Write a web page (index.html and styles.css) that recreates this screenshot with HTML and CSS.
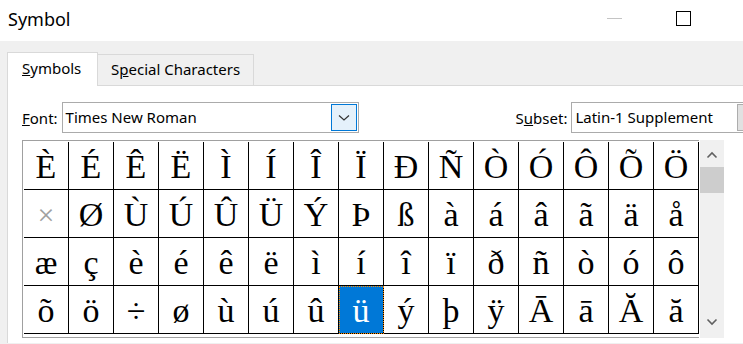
FILE: index.html
```html
<!DOCTYPE html>
<html lang="en">
<head>
  <meta charset="UTF-8" />
  <title>Symbol</title>
  <link rel="stylesheet" href="styles.css">
</head>
<body>
  <div class="titlebar">
    <span class="title">Symbol</span>
    <div class="win-buttons">
      <span class="btn-min"></span>
      <span class="btn-max"></span>
    </div>
  </div>

  <div class="dialog">
    <div class="tabs">
      <div class="tab active"><u>S</u>ymbols</div>
      <div class="tab">S<u>p</u>ecial Characters</div>
    </div>

    <div class="panel">
      <div class="pickers">
        <label class="field-label"><u>F</u>ont:</label>
        <div class="combo font-combo">
          <span class="combo-text">Times New Roman</span>
          <span class="combo-btn">
            <svg width="12" height="8" viewBox="0 0 12 8"><polyline points="1,1.5 6,6 11,1.5" fill="none" stroke="#333" stroke-width="1.2"/></svg>
          </span>
        </div>
        <label class="field-label subset-label">S<u>u</u>bset:</label>
        <div class="combo subset-combo">
          <span class="combo-text">Latin-1 Supplement</span>
          <span class="combo-btn gray"></span>
        </div>
      </div>

      <div class="chars-wrap">
        <div class="chars">
          <div class="char-grid" id="grid"></div>
        </div>
        <div class="scrollbar">
          <svg class="arrow" width="12" height="8" viewBox="0 0 12 8"><polyline points="1.5,6.5 6,2 10.5,6.5" fill="none" stroke="#606060" stroke-width="1.6"/></svg>
          <div class="thumb"></div>
          <div class="track"></div>
          <svg class="arrow" width="12" height="8" viewBox="0 0 12 8"><polyline points="1.5,1.5 6,6 10.5,1.5" fill="none" stroke="#606060" stroke-width="1.6"/></svg>
        </div>
      </div>
    </div>
  </div>

  <script>
    const chars = "ÈÉÊËÌÍÎÏÐÑÒÓÔÕÖ" + "×ØÙÚÛÜÝÞßàáâãäå" + "æçèéêëìíîïðñòóô" + "õö÷øùúûüýþÿĀāĂă";
    const grid = document.getElementById("grid");
    Array.from(chars).forEach(ch => {
      const cell = document.createElement("div");
      cell.className = "cell";
      if (ch === "×") cell.classList.add("faint");
      if (ch === "ü") cell.classList.add("selected");
      cell.textContent = ch;
      grid.appendChild(cell);
    });
  </script>
</body>
</html>
```

FILE: styles.css
```css
html, body {
  margin: 0;
  padding: 0;
}
body {
  width: 743px;
  height: 344px;
  overflow: hidden;
  font-family: "Noto Sans", sans-serif;
  color: #000;
  background: #f0f0f0;
}
.titlebar {
  height: 41px;
  background: #fff;
  display: flex;
  align-items: center;
  justify-content: space-between;
}
.title {
  font-size: 18px;
  padding-left: 8px;
  margin-top: -3px;
}
.win-buttons {
  display: flex;
  align-items: center;
  gap: 54px;
  padding-right: 52px;
  margin-top: -4px;
}
.btn-min {
  width: 15px;
  height: 1px;
  background: #c4c4c4;
}
.btn-max {
  width: 13px;
  height: 13px;
  border: 1px solid #000;
}
.dialog {
  padding: 11px 0 0 7px;
}
.tabs {
  display: flex;
  align-items: flex-end;
  height: 33px;
}
.tab {
  font-size: 15px;
  box-sizing: border-box;
  height: 31px;
  padding: 4px 13px 0 13px;
  border: 1px solid #d9d9d9;
  border-bottom: none;
  border-left: none;
  background: #f0f0f0;
}
.tab.active {
  height: 34px;
  width: 91px;
  padding: 5px 0 0 14px;
  border-left: 1px solid #d9d9d9;
  background: #fff;
  position: relative;
  top: 1px;
  z-index: 1;
}
.panel {
  background: #fff;
  border-top: 1px solid #d9d9d9;
  border-left: 1px solid #d9d9d9;
  height: 258px;
  padding: 16px 0 0 14px;
  box-sizing: border-box;
  overflow: hidden;
}
.pickers {
  display: flex;
  align-items: center;
  height: 31px;
  white-space: nowrap;
}
.field-label {
  font-size: 15px;
  padding-right: 4px;
  flex-shrink: 0;
}
.combo {
  box-sizing: border-box;
  height: 31px;
  border: 1px solid #ababab;
  display: flex;
  align-items: center;
  justify-content: space-between;
  padding: 1px;
  font-size: 15px;
  flex-shrink: 0;
}
.combo-text {
  padding-left: 2px;
  margin-top: -2px;
}
.font-combo {
  width: 297px;
}
.combo-btn {
  box-sizing: border-box;
  width: 26px;
  height: 27px;
  border: 1px solid #0078d7;
  background: #e5f1fb;
  display: flex;
  align-items: center;
  justify-content: center;
}
.combo-btn.gray {
  border-color: #adadad;
  background: #e1e1e1;
}
.subset-label {
  margin-left: 157px;
}
.subset-combo {
  width: 194px;
}
.chars-wrap {
  display: flex;
  margin-top: 7px;
}
.chars {
  border: 1px solid #a0a0a0;
  border-right: none;
  padding: 1px 0 0 1px;
  height: 195px;
  overflow: hidden;
  width: 675px;
  flex-shrink: 0;
}
.char-grid {
  display: grid;
  grid-template-columns: repeat(15, 45px);
  grid-auto-rows: 48px;
}
.cell {
  box-sizing: border-box;
  border-right: 1px solid #000;
  border-bottom: 1px solid #000;
  font-family: "Liberation Serif", serif;
  font-size: 34px;
  line-height: 49px;
  text-align: center;
  overflow: hidden;
}
.cell.faint {
  color: #a0a0a0;
  font-size: 30px;
}
.cell.selected {
  background: #0078d7;
  color: #fff;
  outline: 1px dotted #ff8c00;
  outline-offset: -1px;
}
.scrollbar {
  width: 24px;
  height: 198px;
  margin-left: 1px;
  background: #f0f0f0;
  display: flex;
  flex-direction: column;
  align-items: center;
  flex-shrink: 0;
}
.arrow {
  margin: 11px 0 8px;
}
.scrollbar .arrow:last-child {
  margin: 6px 0 12px;
}
.thumb {
  width: 100%;
  height: 26px;
  background: #cdcdcd;
}
.track {
  flex: 1;
}
```
